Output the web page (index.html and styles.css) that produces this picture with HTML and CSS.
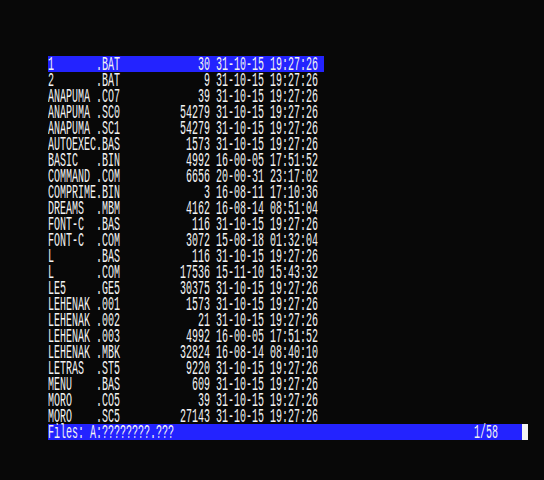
FILE: index.html
```html
<!DOCTYPE html>
<html>
<head>
<meta charset="utf-8">
<link rel="stylesheet" href="styles.css">
</head>
<body>
<div class="screen">
<div class="list">
<div class="row sel"><span class="t">1       .BAT             30 31-10-15 19:27:26</span></div>
<div class="row"><span class="t">2       .BAT              9 31-10-15 19:27:26</span></div>
<div class="row"><span class="t">ANAPUMA .CO7             39 31-10-15 19:27:26</span></div>
<div class="row"><span class="t">ANAPUMA .SC0          54279 31-10-15 19:27:26</span></div>
<div class="row"><span class="t">ANAPUMA .SC1          54279 31-10-15 19:27:26</span></div>
<div class="row"><span class="t">AUTOEXEC.BAS           1573 31-10-15 19:27:26</span></div>
<div class="row"><span class="t">BASIC   .BIN           4992 16-00-05 17:51:52</span></div>
<div class="row"><span class="t">COMMAND .COM           6656 20-00-31 23:17:02</span></div>
<div class="row"><span class="t">COMPRIME.BIN              3 16-08-11 17:10:36</span></div>
<div class="row"><span class="t">DREAMS  .MBM           4162 16-08-14 08:51:04</span></div>
<div class="row"><span class="t">FONT-C  .BAS            116 31-10-15 19:27:26</span></div>
<div class="row"><span class="t">FONT-C  .COM           3072 15-08-18 01:32:04</span></div>
<div class="row"><span class="t">L       .BAS            116 31-10-15 19:27:26</span></div>
<div class="row"><span class="t">L       .COM          17536 15-11-10 15:43:32</span></div>
<div class="row"><span class="t">LE5     .GE5          30375 31-10-15 19:27:26</span></div>
<div class="row"><span class="t">LEHENAK .001           1573 31-10-15 19:27:26</span></div>
<div class="row"><span class="t">LEHENAK .002             21 31-10-15 19:27:26</span></div>
<div class="row"><span class="t">LEHENAK .003           4992 16-00-05 17:51:52</span></div>
<div class="row"><span class="t">LEHENAK .MBK          32824 16-08-14 08:40:10</span></div>
<div class="row"><span class="t">LETRAS  .ST5           9220 31-10-15 19:27:26</span></div>
<div class="row"><span class="t">MENU    .BAS            609 31-10-15 19:27:26</span></div>
<div class="row"><span class="t">MORO    .CO5             39 31-10-15 19:27:26</span></div>
<div class="row"><span class="t">MORO    .SC5          27143 31-10-15 19:27:26</span></div>
</div>
<div class="footer">
<div class="bar"><span class="t">Files: A:????????.???                                                  1/58</span></div>
<div class="cursor"></div>
</div>
</div>
</body>
</html>
```
FILE: styles.css
```css
html, body {
  margin: 0;
  padding: 0;
  background: #080808;
  overflow: hidden;
}
.screen {
  padding: 56px 0 0 48px;
  width: 480px;
}
.list {
  display: flex;
  flex-direction: column;
}
.row, .bar {
  height: 16px;
  white-space: pre;
  font: 10px/8px "Liberation Mono", monospace;
}
.row {
  width: 276px;
}
.sel {
  background: #2323ff;
}
.t {
  display: inline-block;
  vertical-align: top;
  color: #f2f2f2;
  font: 10px/8px "Liberation Mono", monospace;
  height: 7.5px;
  padding-top: 0.5px;
  transform: scaleY(2);
  transform-origin: 0 0;
}
.footer {
  display: flex;
  height: 16px;
}
.bar {
  width: 474px;
  background: #2323ff;
}
.cursor {
  width: 6px;
  background: #f2f2f2;
}
```
